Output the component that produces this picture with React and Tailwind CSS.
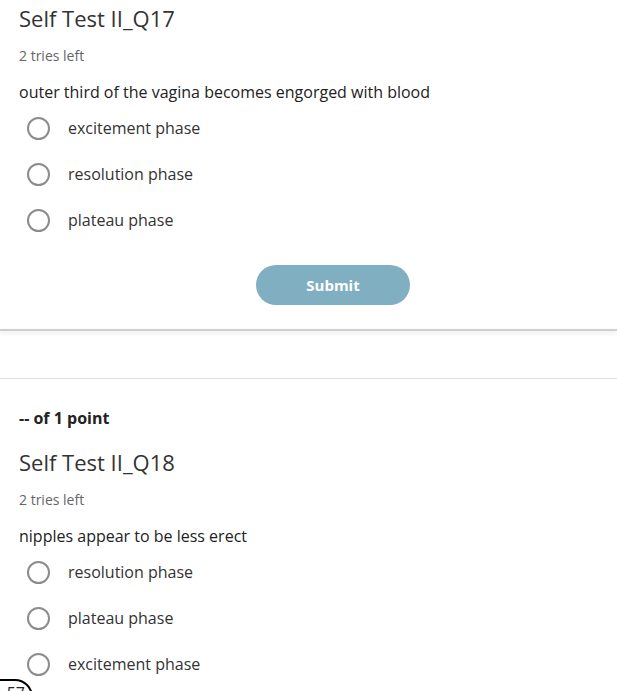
import React from "react";

function Radio({ label }) {
  return (
    <div className="flex items-center h-[46px]">
      <div className="ml-[8px] w-[23px] h-[23px] rounded-full border-2 border-[#8c8c8c] bg-white shrink-0" />
      <span className="ml-[18px] text-[16px] text-[#333]">{label}</span>
    </div>
  );
}

export default function App() {
  return (
    <div
      className="relative w-[617px] h-[691px] overflow-hidden bg-white text-[#222]"
      style={{ fontFamily: '"Open Sans", "Noto Sans", sans-serif' }}
    >
      <div className="px-[19px]">
        <div className="h-[36px] flex items-center text-[22px] text-[#333]">Self Test II_Q17</div>
        <div className="mt-[9px] h-[20px] flex items-center text-[14px] text-[#666]">2 tries left</div>
        <div className="mt-[15px] h-[24px] flex items-center text-[16px] text-[#222]">
          outer third of the vagina becomes engorged with blood
        </div>
        <div className="mt-[1px]">
          <Radio label="excitement phase" />
          <Radio label="resolution phase" />
          <Radio label="plateau phase" />
        </div>
        <div className="mt-[22px] flex justify-center pl-[49px]">
          <button className="w-[154px] h-[40px] rounded-full bg-[#80afc1] text-white text-[15px] font-bold">
            Submit
          </button>
        </div>
      </div>
      <div className="mt-[24px] h-[2px] bg-[#cfcfcf] shadow-[0_2px_4px_rgba(0,0,0,0.12)]" />
      <div className="mt-[47px] h-px bg-[#dedede]" />
      <div className="px-[19px]">
        <div className="mt-[28px] h-[22px] flex items-center text-[16px] font-bold text-[#222]">-- of 1 point</div>
        <div className="mt-[15px] h-[36px] flex items-center text-[22px] text-[#333]">Self Test II_Q18</div>
        <div className="mt-[9px] h-[20px] flex items-center text-[14px] text-[#666]">2 tries left</div>
        <div className="mt-[15px] h-[24px] flex items-center text-[16px] text-[#222]">nipples appear to be less erect</div>
        <div className="mt-[1px]">
          <Radio label="resolution phase" />
          <Radio label="plateau phase" />
          <Radio label="excitement phase" />
        </div>
      </div>
      <div className="absolute left-[-20px] top-[679px] w-[53px] h-[40px] rounded-tr-[18px] rounded-tl-[18px] border-2 border-black bg-white flex justify-end pr-[6px]">
        <span className="text-[16px] leading-[16px] mt-[4px] text-[#222]">57</span>
      </div>
    </div>
  );
}
